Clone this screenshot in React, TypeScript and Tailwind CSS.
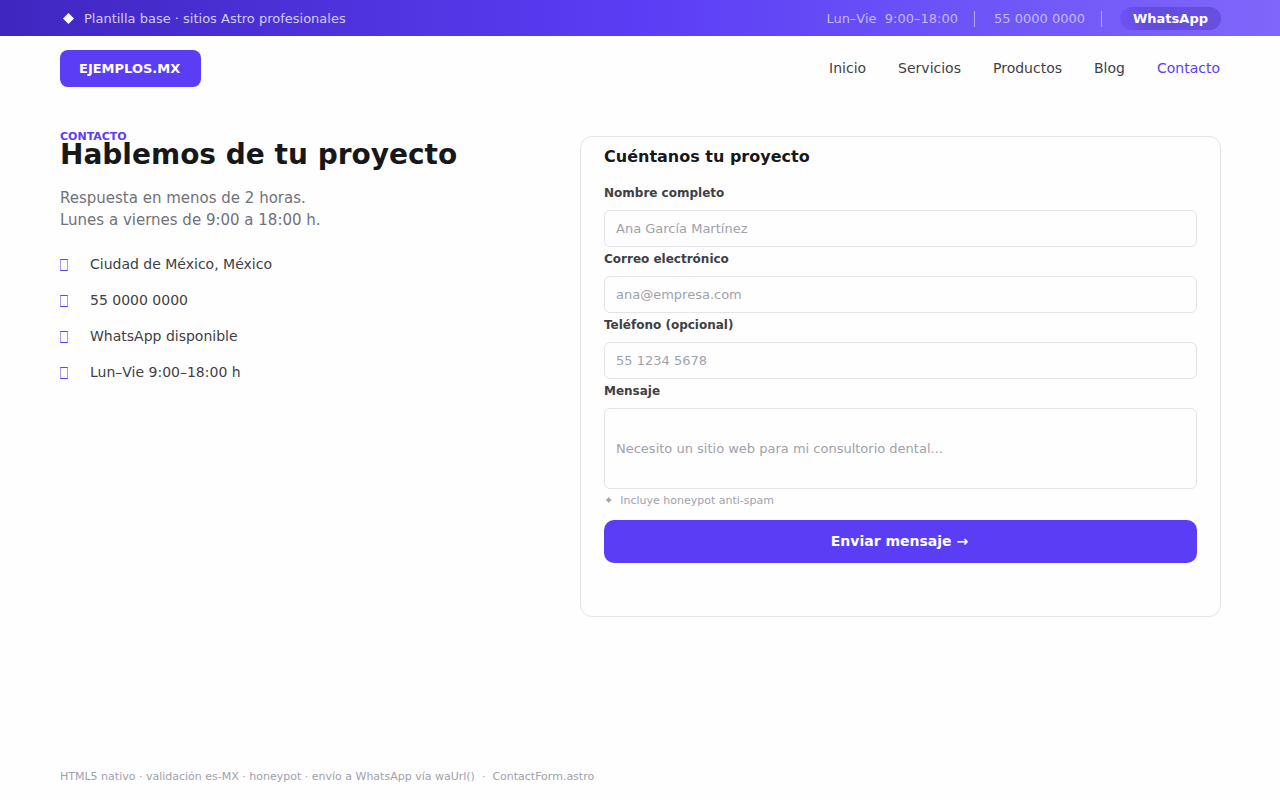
const navLinks = [
    { label: 'Inicio', href: '#inicio' },
    { label: 'Servicios', href: '#servicios' },
    { label: 'Productos', href: '#productos' },
    { label: 'Blog', href: '#blog' },
    { label: 'Contacto', href: '#contacto', active: true },
];

const details = [
    'Ciudad de México, México',
    '55 0000 0000',
    'WhatsApp disponible',
    'Lun–Vie 9:00–18:00 h',
];

const fields = [
    { id: 'nombre', label: 'Nombre completo', type: 'text', placeholder: 'Ana García Martínez' },
    { id: 'correo', label: 'Correo electrónico', type: 'email', placeholder: 'ana@empresa.com' },
    { id: 'telefono', label: 'Teléfono (opcional)', type: 'tel', placeholder: '55 1234 5678' },
];

const TopBar = () => (
    <div className="flex h-9 items-center justify-between bg-linear-to-r from-[#4026c0] via-[#5b3df5] to-[#8066fa] pt-px pr-[59px] pl-[60px] text-[13px]">
        <div className="flex items-center text-[#d3cdf4]">
            <svg className="mr-[10px] ml-[3px] size-[11px]" viewBox="0 0 11 11" fill="#fff" aria-hidden="true">
                <path d="M5.5 0 11 5.5 5.5 11 0 5.5Z" />
            </svg>
            <span>Plantilla base · sitios Astro profesionales</span>
        </div>
        <div className="flex items-center text-[#c3b8f8]">
            <span className="whitespace-pre">Lun–Vie  9:00–18:00</span>
            <span className="mr-[19px] ml-4 h-4 w-px bg-[#b5a6fa]" />
            <a href="tel:5500000000">55 0000 0000</a>
            <span className="mr-[18px] ml-4 h-4 w-px bg-[#b5a6fa]" />
            <a
                href="#whatsapp"
                className="flex h-[23px] items-center rounded-full bg-linear-to-r from-[#7052f4] via-[#644be0] via-25% to-[#674fe0] px-[13px] font-bold text-white"
            >
                WhatsApp
            </a>
        </div>
    </div>
);

const Header = () => (
    <header className="flex items-center justify-between px-[60px] py-[14px]">
        <a href="#inicio" className="flex h-[37px] items-center rounded-lg bg-[#5b3df5] pr-[21px] pl-[19px] text-[13px] font-bold text-white">
            EJEMPLOS.MX
        </a>
        <nav className="flex gap-8 pb-px text-sm text-[#3f3f46]">
            {navLinks.map((link) => (
                <a key={link.href} href={link.href} className={link.active ? 'text-[#5b3df5]' : ''}>
                    {link.label}
                </a>
            ))}
        </nav>
    </header>
);

const ContactInfo = () => (
    <section>
        <p className="text-[11px] leading-4 font-bold text-[#5b3df5]">CONTACTO</p>
        <h1 className="text-[28px] leading-5 font-bold text-[#18181b]">Hablemos de tu proyecto</h1>
        <p className="mt-[22px] text-[15px] leading-[22px] text-[#71717a]">
            Respuesta en menos de 2 horas.
            <br />
            Lunes a viernes de 9:00 a 18:00 h.
        </p>
        <ul className="mt-[23px] flex flex-col gap-4 text-sm text-[#3f3f46]">
            {details.map((detail) => (
                <li key={detail} className="flex items-center">
                    <span className="mt-0.5 mr-[22px] h-3 w-2 border border-x-[#a898f8] border-t-[#5f5a78] border-b-[#5b3df5]" />
                    {detail}
                </li>
            ))}
        </ul>
    </section>
);

const ContactForm = () => (
    <form className="mt-[7px] rounded-xl border border-[#e4e4eb] px-[23px] pt-2 pb-[53px]">
        <h2 className="mb-4 text-base font-bold text-[#18181b]">Cuéntanos tu proyecto</h2>
        {fields.map((field) => (
            <div key={field.id} className="mb-1">
                <label htmlFor={field.id} className="mb-[9px] block text-xs font-bold text-[#3f3f46]">
                    {field.label}
                </label>
                <input
                    id={field.id}
                    type={field.type}
                    placeholder={field.placeholder}
                    className="block h-[37px] w-full rounded-md border border-[#e4e4eb] px-[11px] text-[13px] placeholder:text-[#a1a1aa]"
                />
            </div>
        ))}
        <label htmlFor="mensaje" className="mb-[9px] block text-xs font-bold text-[#3f3f46]">
            Mensaje
        </label>
        <textarea
            id="mensaje"
            placeholder="Necesito un sitio web para mi consultorio dental..."
            className="block h-[81px] w-full resize-none rounded-md border border-[#e4e4eb] px-[11px] pt-[30px] text-[13px] leading-5 placeholder:text-[#a1a1aa]"
        />
        <p className="mt-1 text-[11px] leading-4 whitespace-pre text-[#a1a1aa]">✦  Incluye honeypot anti-spam</p>
        <button type="button" className="mt-[11px] h-[43px] w-full rounded-[10px] bg-[#5b3df5] pr-0.5 pb-0.5 text-sm font-bold text-white">
            Enviar mensaje →
        </button>
    </form>
);

const App = () => (
    <div className="flex min-h-screen flex-col bg-[#fefefe] font-['DejaVu_Sans',sans-serif]">
        <TopBar />
        <Header />
        <main className="grid grow grid-cols-[520fr_641fr] items-start pt-[28px] pr-[59px] pl-[60px]">
            <ContactInfo />
            <ContactForm />
        </main>
        <footer className="px-[60px] pb-[15px] text-[11px] leading-4 whitespace-pre text-[#a1a1aa]">
            HTML5 nativo · validación es-MX · honeypot · envío a WhatsApp vía waUrl()  ·  ContactForm.astro
        </footer>
    </div>
);

export default App;
